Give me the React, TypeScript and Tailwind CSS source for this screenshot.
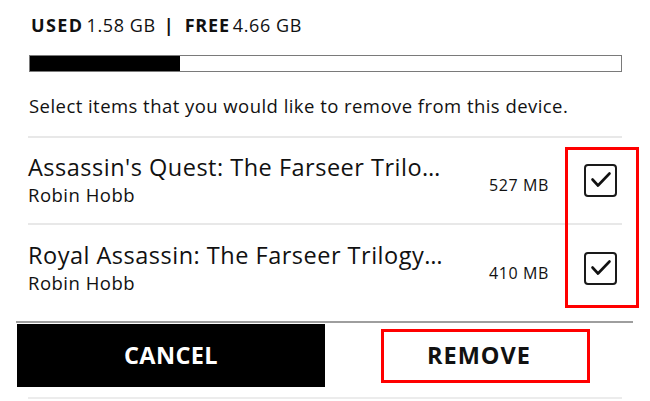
import React from 'react';

const books = [
  { title: "Assassin's Quest: The Farseer Trilo…", author: 'Robin Hobb', size: '527 MB' },
  { title: 'Royal Assassin: The Farseer Trilogy…', author: 'Robin Hobb', size: '410 MB' },
];

const CheckBox = () => (
  <svg width="33" height="33" viewBox="0 0 33 33" className="shrink-0">
    <rect x="1" y="1" width="31" height="31" rx="3" fill="none" stroke="#1a1a1a" strokeWidth="2" />
    <path d="M8.5 15.5 L14 21.5 L25.5 9.5" fill="none" stroke="#111" strokeWidth="2.6" strokeLinecap="round" strokeLinejoin="round" />
  </svg>
);

const App = () => {
  return (
    <div
      className="w-[650px] h-[401px] bg-white text-[#111] overflow-hidden flex flex-col"
      style={{ fontFamily: '"Open Sans", "Noto Sans", sans-serif' }}
    >
      <div className="flex items-baseline pl-[31px] pt-[13px] text-[18px] leading-[24px] whitespace-nowrap">
        <span className="font-bold tracking-[1.4px]">USED</span>
        <span className="ml-[3px] tracking-[0.6px]">1.58 GB</span>
        <span className="font-bold ml-[8px]">|</span>
        <span className="font-bold ml-[11px] tracking-[0.8px]">FREE</span>
        <span className="ml-[3px] tracking-[0.6px]">4.66 GB</span>
      </div>

      <div className="ml-[29px] mt-[18px] w-[593px] h-[17px] border border-[#7a7a7a] flex">
        <div className="w-[150px] h-full bg-black" />
      </div>

      <p className="ml-[29px] mt-[22px] text-[18.5px] leading-[24px] tracking-[0.45px] whitespace-nowrap">
        Select items that you would like to remove from this device.
      </p>

      <div className="relative mx-[28px] mt-[18px] border-t-2 border-[#e8e8e8]">
        {books.map((b, i) => (
          <div
            key={b.title}
            className={`flex items-center h-[87px] ${i === 0 ? 'border-b-2 border-[#e8e8e8]' : ''}`}
          >
            <div className="flex-1 min-w-0">
              <div className="text-[23.5px] leading-[26px] tracking-[0.5px] whitespace-nowrap">{b.title}</div>
              <div className="text-[18.5px] leading-[24px] tracking-[0.5px] mt-[3px]">{b.author}</div>
            </div>
            <div className="text-[16px] leading-[24px] tracking-[0.6px] pt-[8px] whitespace-nowrap">{b.size}</div>
            <div className="ml-[35px] mr-[5px] flex">
              <CheckBox />
            </div>
          </div>
        ))}
        <div className="absolute left-[537px] top-[9px] w-[74px] h-[161px] border-[3px] border-[#ff0000]" />
      </div>

      <div className="mx-[16px] mt-[9px] h-[2px] bg-[#9e9e9e] w-[617px]" />
      <div className="mx-[17px] mt-[1px] flex h-[63px]">
        <button className="w-[308px] h-full bg-black text-white font-bold text-[23.5px] tracking-[0.4px]">
          CANCEL
        </button>
        <button className="relative flex-1 h-full bg-white text-[#111] font-bold text-[23.5px] tracking-[1px]">
          REMOVE
          <span className="absolute left-[56px] right-[43px] top-[5px] bottom-[4px] border-[3px] border-[#ff0000]" />
        </button>
      </div>
      <div className="mx-[28px] mt-[10px] h-[2px] bg-[#ececec]" />
    </div>
  );
};

export default App;
